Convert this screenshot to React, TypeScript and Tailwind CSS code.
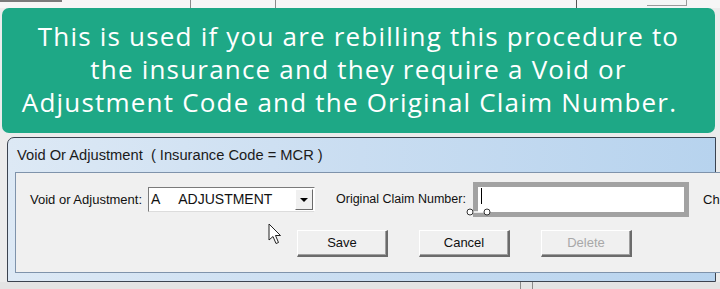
import React from "react";

function ClassicButton({ label, disabled }: { label: string; disabled?: boolean }) {
  return (
    <div className="w-[91px] h-[27px] bg-[#f0f0f0] border-t border-l border-t-white border-l-white border-r-2 border-b-2 border-r-[#6b6b6b] border-b-[#6b6b6b] shadow-[inset_-1px_-1px_0_#a0a0a0] flex items-center justify-center">
      <span className={disabled ? "text-[13px] text-[#a8a8a8]" : "text-[13px] text-[#111]"}>{label}</span>
    </div>
  );
}

function MousePointer() {
  return (
    <svg width="14" height="22" viewBox="0 0 14 22" className="absolute left-[252px] top-[50px]">
      <path d="M1 1 L1 17 L5 13.5 L8 20.5 L10.5 19.5 L7.5 12.5 L12.5 12.5 Z" fill="#fff" stroke="#222" strokeWidth="1" strokeLinejoin="round" />
    </svg>
  );
}

export default function App() {
  return (
    <div className="w-[720px] h-[289px] overflow-hidden bg-[#ececec] flex flex-col font-['Liberation_Sans',Arial,sans-serif]">
      {/* form behind, top strip */}
      <div className="h-[8px] flex items-start shrink-0 bg-[#f6f6f6]">
        <div className="w-[62px] h-[2px] bg-[#7a7a7a]" />
        <div className="ml-[128px] w-[86px] h-[8px] border-l border-r border-[#8a8a8a]" />
        <div className="ml-[300px] w-px h-[8px] bg-[#555]" />
        <div className="ml-[70px] w-[40px] h-[6px] border-b border-r border-[#9a9a9a]" />
      </div>

      {/* green caption */}
      <div className="ml-[2px] w-[713px] h-[125px] shrink-0 rounded-[7px] bg-[#1ea886] flex flex-col items-center justify-center pb-[2px] text-white text-[26px] leading-[33px] font-['Open_Sans',sans-serif] font-medium tracking-[1.2px]">
        <p>This is used if you are rebilling this procedure to</p>
        <p>the insurance and they require a Void or</p>
        <p className="-ml-[18px]">Adjustment Code and the Original Claim Number.</p>
      </div>

      <div className="h-[4px] shrink-0" />

      {/* dialog */}
      <div className="relative ml-[7px] w-[709px] h-[145px] shrink-0 rounded-tl-[7px] border border-[#3c4450] bg-gradient-to-r from-[#dde9f5] via-[#c9ddf1] to-[#b7d3ee] flex flex-col">
        <div className="h-[34px] shrink-0 flex items-center pl-[9px] text-[14.7px] text-[#1b1b1b]">
          <span className="whitespace-pre">Void Or Adjustment  ( Insurance Code = MCR )</span>
        </div>
        <div className="flex-1 flex px-[7px]">
          <div className="relative flex-1 h-[101px] border border-[#7f93ab] bg-[#f0f0f0] text-[13px] text-[#111]">
            <div className="flex items-center pt-[9px] pl-[14px]">
              <span className="w-[118px]">Void or Adjustment:</span>
              <div className="w-[167px] h-[25px] bg-white border-t border-l border-t-[#7a7a7a] border-l-[#7a7a7a] border-r border-b border-r-white border-b-[#dcdcdc] flex items-center">
                <span className="flex-1 pl-[2px] text-[14px] whitespace-pre">A     ADJUSTMENT</span>
                <div className="w-[18px] h-[21px] mr-[1px] bg-[#f0f0f0] border-t border-l border-white border-r border-b border-r-[#6b6b6b] border-b-[#6b6b6b] flex items-center justify-center">
                  <div className="w-0 h-0 border-l-[4px] border-r-[4px] border-t-[4px] border-l-transparent border-r-transparent border-t-black" />
                </div>
              </div>
              <span className="ml-[21px] w-[137px] text-[12.5px]">Original Claim Number:</span>
              <div className="relative w-[216px] h-[35px] shrink-0 border-[5px] border-[#a2a2a2] bg-white">
                <div className="absolute left-[3px] top-[1px] w-px h-[16px] bg-black" />
                <svg width="30" height="10" viewBox="0 0 30 10" className="absolute -left-[12px] top-[20px]">
                  <line x1="7" y1="5" x2="18" y2="5" stroke="#fff" strokeWidth="1.5" />
                  <circle cx="4" cy="5" r="3" fill="#fff" stroke="#333" strokeWidth="1" />
                  <circle cx="21" cy="5" r="3" fill="#fff" stroke="#333" strokeWidth="1" />
                </svg>
              </div>
              <span className="ml-[14px] whitespace-nowrap">Ch</span>
            </div>
            <div className="flex items-center mt-[13px] pl-[281px] gap-[31px]">
              <ClassicButton label="Save" />
              <ClassicButton label="Cancel" />
              <ClassicButton label="Delete" disabled />
            </div>
            <MousePointer />
          </div>
        </div>
        <div className="h-[9px] shrink-0" />
      </div>

      {/* form behind, bottom strip */}
      <div className="flex-1 flex bg-[#e4e4e4]">
        <div className="ml-[520px] w-px bg-[#8a8a8a]" />
        <div className="ml-[11px] w-px bg-[#8a8a8a]" />
      </div>
    </div>
  );
}
